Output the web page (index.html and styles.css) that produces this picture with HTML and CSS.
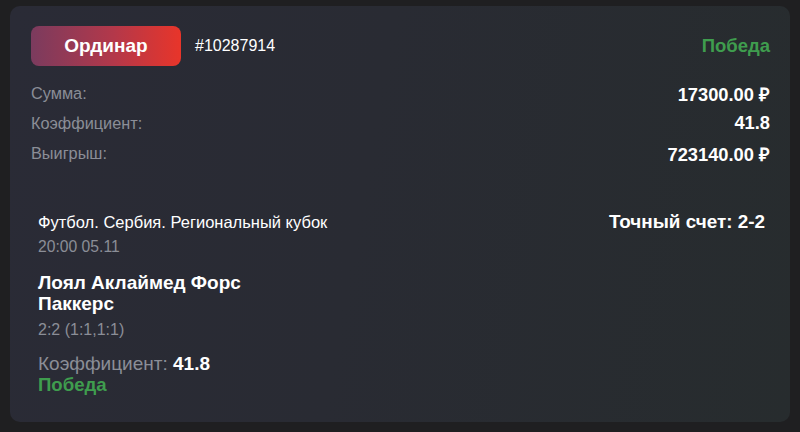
FILE: index.html
```html
<!DOCTYPE html>
<html lang="ru">
<head>
<meta charset="utf-8">
<link rel="stylesheet" href="styles.css">
</head>
<body>
<div class="card">
  <div class="head">
    <div class="type">Ординар</div>
    <div class="num">#10287914</div>
    <div class="status">Победа</div>
  </div>
  <div class="rows">
    <div class="row"><span class="lbl">Сумма:</span><span class="val">17300.00 ₽</span></div>
    <div class="row"><span class="lbl">Коэффициент:</span><span class="val">41.8</span></div>
    <div class="row"><span class="lbl">Выигрыш:</span><span class="val">723140.00 ₽</span></div>
  </div>
  <div class="event">
    <div class="ev-left">
      <div class="league">Футбол. Сербия. Региональный кубок</div>
      <div class="time">20:00 05.11</div>
      <div class="teams">Лоял Аклаймед Форс<br>Паккерс</div>
      <div class="score">2:2 (1:1,1:1)</div>
      <div class="coef">Коэффициент: <b>41.8</b></div>
      <div class="win">Победа</div>
    </div>
    <div class="ev-right">Точный счет: 2-2</div>
  </div>
</div>
</body>
</html>
```
FILE: styles.css
```css
html, body {
  margin: 0;
  padding: 0;
  background: #1f1f21;
  width: 800px;
  height: 432px;
  overflow: hidden;
  font-family: "Liberation Sans", Arial, sans-serif;
}
.card {
  margin: 6px 10px 0 10px;
  height: 416px;
  box-sizing: border-box;
  border-radius: 10px;
  background: linear-gradient(100deg, #2a2b36 0%, #292b33 45%, #272c2e 100%);
  padding: 20px 20px 0 21px;
  color: #fff;
}
.head {
  display: flex;
  align-items: center;
  height: 40px;
}
.type {
  width: 150px;
  height: 40px;
  border-radius: 8px;
  background: linear-gradient(90deg, #7b3b5e 0%, #b3384a 55%, #e8352a 100%);
  display: flex;
  align-items: center;
  justify-content: center;
  font-weight: bold;
  font-size: 19px;
}
.num {
  margin-left: 14px;
  font-size: 16px;
}
.status {
  margin-left: auto;
  color: #3f9d4e;
  font-weight: bold;
  font-size: 18.5px;
}
.rows {
  margin-top: 12px;
}
.row {
  display: flex;
  justify-content: space-between;
  align-items: center;
  height: 30px;
}
.lbl {
  color: #8b8e97;
  font-size: 16.3px;
}
.val {
  font-weight: bold;
  font-size: 18.3px;
}
.event {
  display: flex;
  justify-content: space-between;
  align-items: flex-start;
  margin-top: 44px;
  padding: 0 5px 0 7px;
}
.league {
  font-size: 16.5px;
  line-height: 20px;
}
.time {
  margin-top: 5px;
  color: #8b8e97;
  font-size: 15.7px;
  line-height: 20px;
}
.teams {
  margin-top: 15px;
  font-weight: bold;
  font-size: 19px;
  line-height: 21px;
}
.score {
  margin-top: 6px;
  color: #8b8e97;
  font-size: 16px;
  line-height: 20px;
}
.coef {
  margin-top: 13px;
  color: #8b8e97;
  font-size: 19px;
  line-height: 21px;
}
.coef b {
  color: #fff;
}
.win {
  color: #3f9d4e;
  font-weight: bold;
  font-size: 18.6px;
  line-height: 21px;
}
.ev-right {
  font-weight: bold;
  font-size: 18.9px;
  line-height: 20px;
}
```
